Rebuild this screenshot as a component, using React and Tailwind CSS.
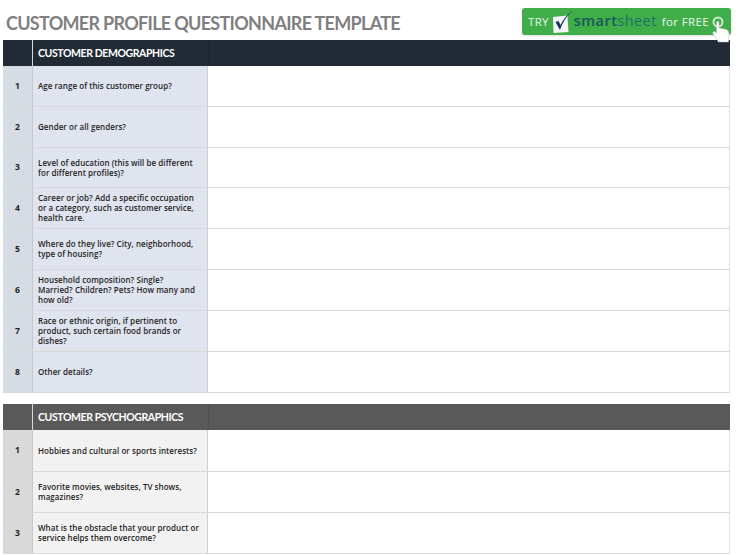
const demographics = [
  ["Age range of this customer group?"],
  ["Gender or all genders?"],
  ["Level of education (this will be different", "for different profiles)?"],
  ["Career or job? Add a specific occupation", "or a category, such as customer service,", "health care."],
  ["Where do they live? City, neighborhood,", "type of housing?"],
  ["Household composition? Single?", "Married? Children? Pets? How many and", "how old?"],
  ["Race or ethnic origin, if pertinent to", "product, such certain food brands or", "dishes?"],
  ["Other details?"],
];

const psychographics = [
  ["Hobbies and cultural or sports interests?"],
  ["Favorite movies, websites, TV shows,", "magazines?"],
  ["What is the obstacle that your product or", "service helps them overcome?"],
];

function Section({ title, rows, headerBg, numBg, questionBg, rowHeights }) {
  return (
    <div className="w-[727px]">
      <div className={`flex h-[26px] ${headerBg}`}>
        <div className="w-[30px] shrink-0 border-r border-[#d9d9d9]" />
        <div className="w-[175px] shrink-0 pl-[5px] text-[10.5px] font-bold leading-[26px] tracking-[-0.4px] text-white font-['Lato',sans-serif] whitespace-nowrap">
          {title}
        </div>
        <div className="flex-1 border-l border-black/10" />
      </div>
      {rows.map((lines, i) => (
        <div key={i} className={`flex ${rowHeights[i]} border-b border-[#d9d9d9]`}>
          <div className={`w-[30px] shrink-0 flex items-center justify-center border-r border-[#c8c8c8] text-[8.5px] font-bold text-[#222] ${numBg}`}>
            {i + 1}
          </div>
          <div className={`w-[175px] shrink-0 flex flex-col justify-center pl-[5px] border-r border-[#d0d0d0] text-[8px] font-semibold leading-[10px] tracking-[0.05px] text-[#1f1f1f] whitespace-nowrap ${questionBg}`}>
            {lines.map((line) => (
              <span key={line}>{line}</span>
            ))}
          </div>
          <div className="flex-1 bg-white border-r border-[#e2e2e2]" />
        </div>
      ))}
    </div>
  );
}

function TryButton() {
  return (
    <div className="absolute left-[522px] top-[8px] flex h-[27px] w-[209px] items-center rounded-[3px] bg-[#3fae49] pl-[6px] shadow-sm whitespace-nowrap">
      <span className="text-[11.5px] tracking-[0.3px] text-[#e8f5e9]">TRY</span>
      <svg className="ml-[3px] shrink-0" width="21" height="24" viewBox="0 0 21 24">
        <path d="M1 7 L15.5 5.5 L16.5 22 L1.5 23 Z" fill="#f3f5f7" />
        <path d="M3.5 12 L8 20 Q11 10 20 1 Q13 6 8.5 15 L6.5 11 Z" fill="#14325c" />
      </svg>
      <span className="ml-[1px] text-[14.5px] leading-none tracking-[0.45px] text-[#17565f]">
        <span className="font-semibold">smart</span>
        <span className="text-[#1f6f66]">sheet</span>
      </span>
      <span className="ml-[5px] text-[11.5px] tracking-[0.35px] text-[#eef8ef]">for FREE</span>
      <svg className="absolute left-[188px] top-[7px]" width="24" height="28" viewBox="0 0 24 28">
        <circle cx="8" cy="7" r="4.5" fill="none" stroke="#cfe9d1" strokeWidth="2" />
        <path
          d="M6.5 7.5 C6.5 6 9 6 9 7.5 L9 13 L14.5 14 C17.5 14.6 19 16 19 19 L18.5 27 L8.5 27 L3 18.5 C2.3 17 4.3 15.8 5.5 17 L6.5 18 Z"
          fill="#ffffff"
          stroke="#b9b9b9"
          strokeWidth="0.5"
        />
      </svg>
    </div>
  );
}

export default function App() {
  return (
    <div className="relative h-[555px] w-[741px] overflow-hidden bg-white font-['Open_Sans','Liberation_Sans',sans-serif]">
      <h1 className="h-[40px] pl-[6px] pt-[10px] text-[18px] font-bold leading-[26px] tracking-[-0.7px] text-[#7f7f7f] font-['Lato',sans-serif] whitespace-nowrap">
        CUSTOMER PROFILE QUESTIONNAIRE TEMPLATE
      </h1>
      <TryButton />
      <div className="flex flex-col gap-[11px] pl-[3px]">
        <Section
          title="CUSTOMER DEMOGRAPHICS"
          rows={demographics}
          headerBg="bg-[#222b35]"
          numBg="bg-[#d6dce4]"
          questionBg="bg-[#dfe4ee]"
          rowHeights={["h-[41px]", "h-[41px]", "h-[40px]", "h-[41px]", "h-[41px]", "h-[41px]", "h-[41px]", "h-[41px]"]}
        />
        <Section
          title="CUSTOMER PSYCHOGRAPHICS"
          rows={psychographics}
          headerBg="bg-[#595959]"
          numBg="bg-[#d9d9d9]"
          questionBg="bg-[#f2f2f2]"
          rowHeights={["h-[42px]", "h-[41px]", "h-[41px]"]}
        />
      </div>
    </div>
  );
}
